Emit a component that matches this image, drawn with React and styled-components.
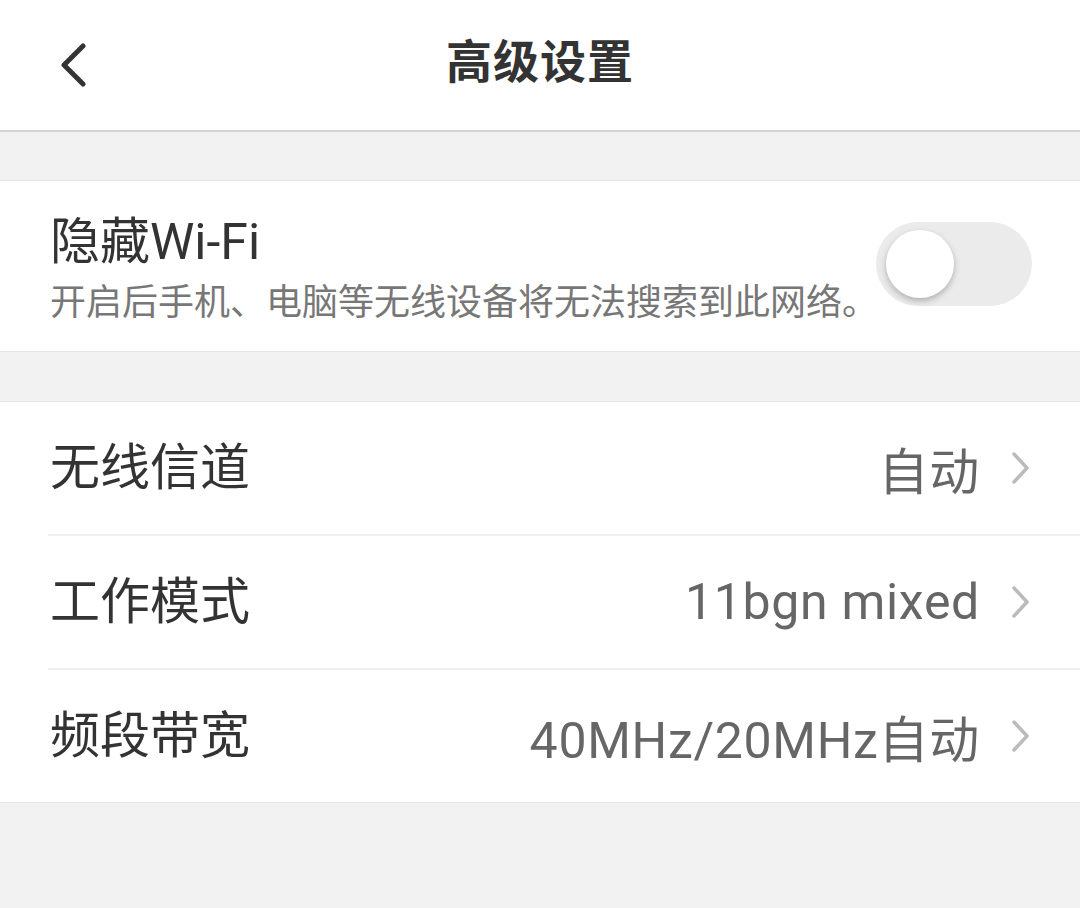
import React, { useState } from 'react';
import styled, { createGlobalStyle } from 'styled-components';

const GlobalStyle = createGlobalStyle`
    html, body {
        margin: 0;
        padding: 0;
        background-color: #f2f2f2;
        font-family: Roboto, "Noto Sans CJK SC", sans-serif;
    }
`;

const Page = styled.div`
    display: flex;
    flex-direction: column;
    width: 1080px;
    min-height: 908px;
    background-color: #f2f2f2;
`;

const Header = styled.header`
    display: flex;
    align-items: center;
    justify-content: center;
    position: relative;
    height: 130px;
    background-color: #fff;
    border-bottom: 2px solid #d4d4d4;
`;

const BackButton = styled.button`
    position: absolute;
    left: 46px;
    top: 38px;
    width: 54px;
    height: 54px;
    display: flex;
    align-items: center;
    justify-content: center;
    padding: 0;
    background: none;
    border: none;
    cursor: pointer;
`;

const Title = styled.h1`
    margin: 0 0 14px;
    font-size: 46px;
    font-weight: bold;
    color: #333;
    letter-spacing: 1px;
`;

const Section = styled.section`
    display: flex;
    flex-direction: column;
    margin-top: ${(p) => p.$gap}px;
    background-color: #fff;
    border-top: 1px solid #e4e4e4;
    border-bottom: 1px solid #e4e4e4;
`;

const SwitchRow = styled.div`
    display: flex;
    align-items: center;
    justify-content: space-between;
    height: 170px;
    padding: 0 48px 0 50px;
`;

const TextBlock = styled.div`
    display: flex;
    flex-direction: column;
    gap: 14px;
    padding-top: 6px;
`;

const Label = styled.div`
    font-size: 50px;
    color: #333;
    line-height: 1.1;
`;

const Hint = styled.div`
    font-size: 36px;
    color: #777;
    line-height: 1.1;
    margin-right: -20px;
`;

const Track = styled.button`
    flex-shrink: 0;
    position: relative;
    width: 156px;
    height: 84px;
    padding: 0;
    border: none;
    border-radius: 42px;
    background-color: ${(p) => (p.$on ? '#2bb3a6' : '#ebebeb')};
    cursor: pointer;
    margin-top: -4px;
`;

const Knob = styled.span`
    position: absolute;
    top: 8px;
    left: ${(p) => (p.$on ? '80px' : '10px')};
    width: 68px;
    height: 68px;
    border-radius: 50%;
    background-color: #fff;
    box-shadow: 0 3px 6px rgba(0, 0, 0, 0.25);
    transition: left 0.2s;
`;

const Row = styled.div`
    display: flex;
    align-items: center;
    height: 132px;
    padding-left: 50px;
    cursor: pointer;
`;

const RowInner = styled.div`
    flex: 1;
    display: flex;
    align-items: center;
    justify-content: space-between;
    height: 100%;
    padding-right: 50px;
`;

const Divider = styled.div`
    height: 2px;
    margin-left: 48px;
    background-color: #efefef;
`;

const Value = styled.div`
    display: flex;
    align-items: center;
    gap: 32px;
    font-size: 50px;
    letter-spacing: 0.7px;
    color: #666;
`;

const Chevron = ({ color = '#bbb', w = 18, h = 32, sw = 3.5 }) => (
    <svg width={w} height={h} viewBox={`0 0 ${w} ${h}`} fill="none">
        <path d={`M2 2 L${w - 3} ${h / 2} L2 ${h - 2}`} stroke={color} strokeWidth={sw} strokeLinecap="round" strokeLinejoin="round" />
    </svg>
);

const BackIcon = () => (
    <svg width="30" height="44" viewBox="0 0 30 44" fill="none">
        <path d="M25 3 L6 22 L25 41" stroke="#333" strokeWidth="5" strokeLinecap="round" strokeLinejoin="round" />
    </svg>
);

const rows = [
    { label: '无线信道', value: '自动' },
    { label: '工作模式', value: '11bgn mixed' },
    { label: '频段带宽', value: '40MHz/20MHz自动' },
];

const App = () => {
    const [hidden, setHidden] = useState(false);

    return (
        <Page>
            <GlobalStyle />
            <Header>
                <BackButton aria-label="back">
                    <BackIcon />
                </BackButton>
                <Title>高级设置</Title>
            </Header>

            <Section $gap={48}>
                <SwitchRow>
                    <TextBlock>
                        <Label>隐藏Wi-Fi</Label>
                        <Hint>开启后手机、电脑等无线设备将无法搜索到此网络。</Hint>
                    </TextBlock>
                    <Track $on={hidden} onClick={() => setHidden(!hidden)}>
                        <Knob $on={hidden} />
                    </Track>
                </SwitchRow>
            </Section>

            <Section $gap={49}>
                {rows.map((row, i) => (
                    <React.Fragment key={row.label}>
                        {i > 0 && <Divider />}
                        <Row>
                            <RowInner>
                                <Label>{row.label}</Label>
                                <Value>
                                    {row.value}
                                    <Chevron />
                                </Value>
                            </RowInner>
                        </Row>
                    </React.Fragment>
                ))}
            </Section>
        </Page>
    );
};

export default App;
